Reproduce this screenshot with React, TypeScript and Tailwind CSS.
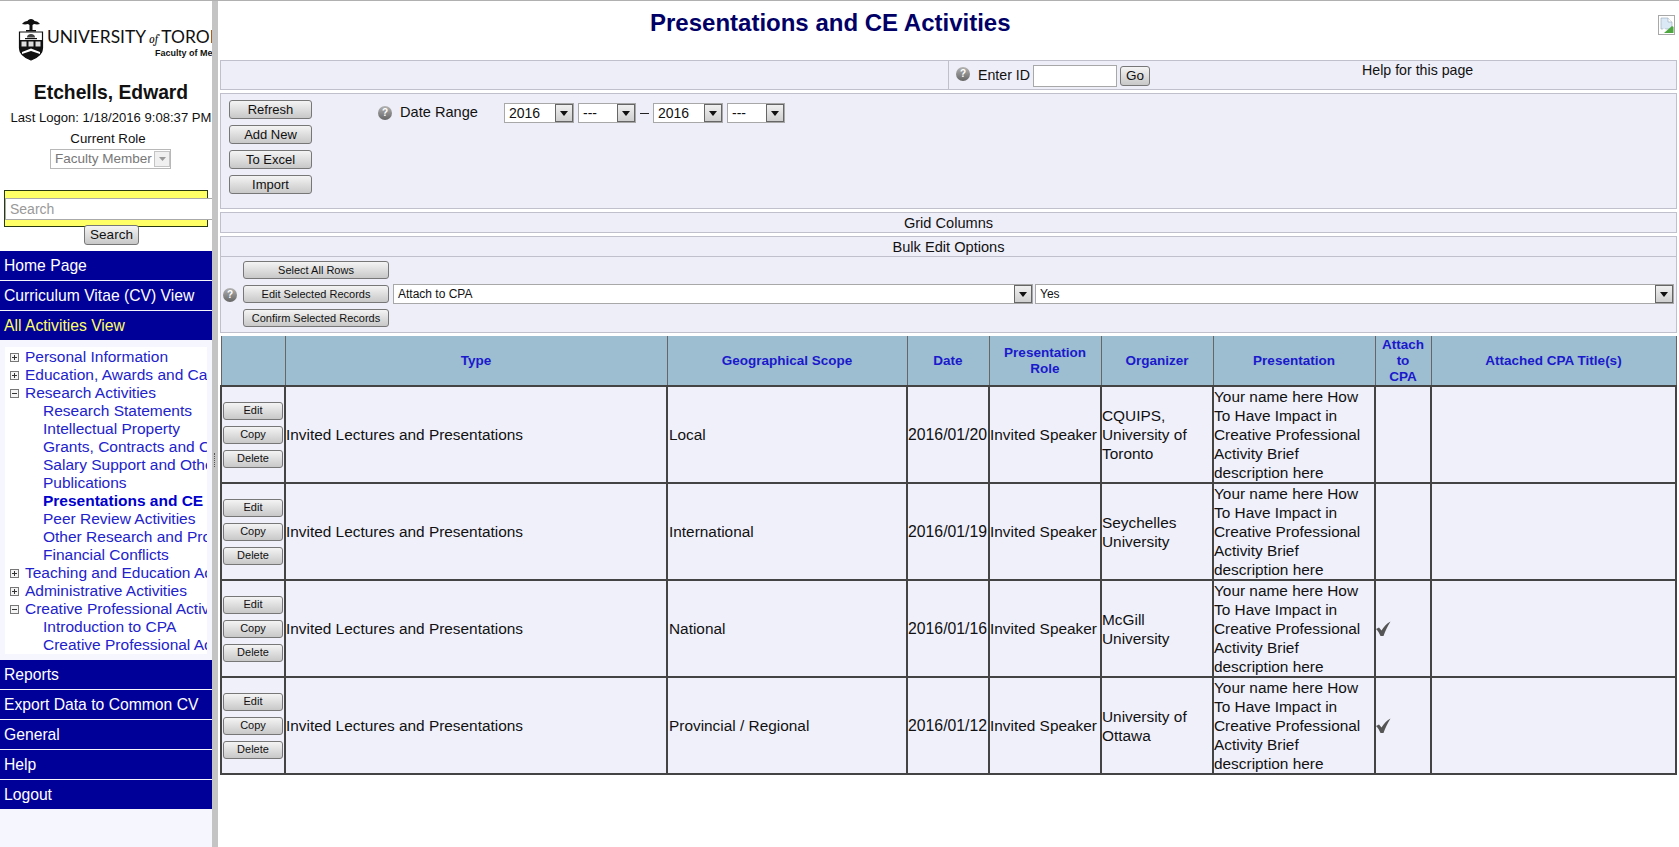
const font = { fontFamily: '"Liberation Sans", Arial, sans-serif' };

const treeTop = [
  { label: "Personal Information", open: false },
  { label: "Education, Awards and Career Information", open: false },
  { label: "Research Activities", open: true },
];
const researchKids = [
  "Research Statements",
  "Intellectual Property",
  "Grants, Contracts and Clinical Trials",
  "Salary Support and Other Funding",
  "Publications",
  "Presentations and CE Activities",
  "Peer Review Activities",
  "Other Research and Professional",
  "Financial Conflicts",
];

const rows = [
  { scope: "Local", date: "2016/01/20", org: "CQUIPS, University of Toronto", cpa: false },
  { scope: "International", date: "2016/01/19", org: "Seychelles University", cpa: false },
  { scope: "National", date: "2016/01/16", org: "McGill University", cpa: true },
  { scope: "Provincial / Regional", date: "2016/01/12", org: "University of Ottawa", cpa: true },
];

const NavItem = ({ label, active }: { label: string; active?: boolean }) => (
  <div className={`h-[29px] mb-px bg-[#000099] pl-1 text-[15.700px] leading-[29px] ${active ? "text-[#ffff66]" : "text-white"}`}>
    {label}
  </div>
);

const TreeBox = ({ open }: { open: boolean }) => (
  <svg width="9" height="9" viewBox="0 0 9 9" className="shrink-0">
    <rect x="0.5" y="0.5" width="8" height="8" fill="#f4f4f4" stroke="#777" />
    <path d={open ? "M2 4.5h5" : "M2 4.5h5M4.5 2v5"} stroke="#333" />
  </svg>
);

const TreeParent = ({ label, open }: { label: string; open: boolean }) => (
  <div className="flex h-[18px] items-center pl-[5px] whitespace-nowrap">
    <TreeBox open={open} />
    <span className="ml-[6px]">{label}</span>
  </div>
);

const TreeChild = ({ label, bold }: { label: string; bold?: boolean }) => (
  <div className={`h-[18px] pl-[38px] leading-[18px] whitespace-nowrap ${bold ? "font-bold text-[#0000cc]" : ""}`}>{label}</div>
);

const Btn = ({ label, className }: { label: string; className: string }) => (
  <button className={`block rounded-[3px] border border-[#777] bg-gradient-to-b from-[#f4f4f4] to-[#c8c8c8] text-center leading-none text-[#111] ${className}`}>
    {label}
  </button>
);

const Select = ({ value, className }: { value: string; className: string }) => (
  <div className={`flex items-stretch border border-[#a8a8a8] bg-white text-[#111] ${className}`}>
    <span className="flex-1 self-center overflow-hidden pl-1 whitespace-nowrap">{value}</span>
    <span className="flex w-[18px] items-center justify-center border border-[#666] bg-gradient-to-b from-[#f0f0f0] to-[#cfcfcf]">
      <svg width="8" height="5" viewBox="0 0 8 5">
        <path d="M0 0h8L4 5z" fill="#111" />
      </svg>
    </span>
  </div>
);

const HelpIcon = ({ className = "" }: { className?: string }) => (
  <span className={`flex h-[14px] w-[14px] shrink-0 items-center justify-center rounded-full bg-gradient-to-b from-[#b4b4b4] to-[#666] text-[10px] leading-none font-bold text-white ${className}`}>
    ?
  </span>
);

const Crest = () => (
  <svg width="26" height="42" viewBox="0 0 26 42" className="shrink-0">
    {/* tree */}
    <path d="M13 0c2 0 3 1 3.500 2 2 0 4 1 5.500 3-2 .5-4 .5-6 0l-1.500 1V12h-3V6l-1.500-1c-2 .5-4 .5-6 0C5.500 3 7.500 2 9.500 2 10 1 11 0 13 0z" fill="#111" />
    <path d="M8 11h10v1.500H8z" fill="#111" />
    {/* shield */}
    <path d="M1.500 13h23v16c0 6-5 9.500-11.500 12C6.500 38.500 1.500 35 1.500 29z" fill="#fff" stroke="#111" strokeWidth="1.200" />
    <path d="M13 15c-2.500 0-4 1.500-4 3.500h8c0-2-1.500-3.500-4-3.500z" fill="#444" />
    <path d="M7 19h12v1.200H7z" fill="#111" />
    <path d="M1.500 21h23v8H1.500z" fill="#111" />
    <path d="M3.500 22.500h5v5h-5zM10.500 22.500h5v5h-5zM17.500 22.500h5v5h-5z" fill="#ddd" />
    <path d="M1.500 29h23c0 6-5 9.500-11.500 12C6.500 38.500 1.500 35 1.500 29z" fill="#111" />
    <path d="M4 33l9-3.500 9 3.500v2l-9-3-9 3z" fill="#fff" />
  </svg>
);

const BrokenImage = () => (
  <svg width="17" height="20" viewBox="0 0 17 20">
    <rect x="0.5" y="0.5" width="16" height="19" fill="#fff" stroke="#a8a8a8" />
    <path d="M3 3h7l4 4v7L3 14z" fill="#dbe8f6" stroke="#9ab" strokeWidth="0.6" />
    <path d="M10 3v4h4" fill="#fff" stroke="#9ab" strokeWidth="0.6" />
    <path d="M6 18l8-7 1.500 1v6z" fill="#4ea641" />
    <path d="M3 17l3-4 2 2-3 3z" fill="#fff" />
  </svg>
);

const Check = () => (
  <svg width="15" height="15" viewBox="0 0 15 15" className="block">
    <path d="M0 8l3-1.500 2.500 3C7.500 6 10.500 2.500 14.500 0.500 11.500 5 9.500 9.500 7.500 15h-3C3.500 12.500 2 10 0 8z" fill="#555" />
  </svg>
);

const Th = ({ children }: { children?: React.ReactNode }) => (
  <th className="border-x border-b-2 border-x-[#666] border-b-[#444] bg-[#9dbdd0] p-0 text-center align-middle text-[13.500px] leading-[16px] font-bold text-[#1a1acc]">
    {children}
  </th>
);

const Td = ({ children }: { children?: React.ReactNode }) => (
  <td className="border-2 border-[#444] p-0 align-middle">{children}</td>
);

export default function App() {
  return (
    <div style={font} className="flex h-[847px] w-[1679px] overflow-hidden border-t border-[#b0b0b0] bg-white text-[16px] text-[#111]">
      {/* left menu */}
      <aside className="w-[212px] shrink-0 overflow-hidden bg-[#f6f6ff]">
        <div className="h-[250px] bg-white">
          <div className="flex h-[62px] items-start pt-[18px] pl-[18px] whitespace-nowrap">
            <Crest />
            <div className="ml-[3px] pt-[8px]">
              <div className="text-[17.400px] leading-[20px] text-[#111]" style={{ fontFamily: "Lato, sans-serif" }}>
                UNIVERSITY<span className="mx-[3px] font-serif text-[12px] italic">of</span>TORONTO
              </div>
              <div className="-mt-px pl-[108px] text-[9px] leading-[10px] font-bold">Faculty of Medicine</div>
            </div>
          </div>
          <div className="mt-[19px] pl-[10px] text-center text-[19.300px] leading-[22px] font-bold">Etchells, Edward</div>
          <div className="mt-[6px] pl-[10px] text-center text-[13.100px] leading-[16px] whitespace-nowrap">Last Logon: 1/18/2016 9:08:37 PM</div>
          <div className="mt-[5px] pl-[4px] text-center text-[13.300px] leading-[16px]">Current Role</div>
          <div className="mt-[2px] ml-[50px] flex h-[20px] w-[121px] items-center border border-[#b8b8b8] text-[13.500px] whitespace-nowrap text-[#777]">
            <span className="flex-1 pl-1">Faculty Member</span>
            <span className="flex h-[16px] w-[16px] items-center justify-center border border-[#c4c4c4] bg-[#f0f0f0]">
              <svg width="7" height="4" viewBox="0 0 7 4"><path d="M0 0h7L3.500 4z" fill="#999" /></svg>
            </span>
          </div>
          <div className="mt-[21px] ml-[4px] flex h-[37px] w-[204px] items-center border border-[#2a3a10] bg-[#ffff66]">
            <div className="h-[22px] w-[210px] shrink-0 border border-[#aaa] bg-white pl-1 text-[14px] leading-[20px] text-[#999]">Search</div>
          </div>
          <Btn label="Search" className="mt-[-2px] ml-[84px] h-[20px] w-[55px] text-[13.500px]" />
        </div>
        <NavItem label="Home Page" />
        <NavItem label="Curriculum Vitae (CV) View" />
        <NavItem label="All Activities View" active />
        <div className="mx-[5px] mt-[7px] mb-[6px] h-[307px] overflow-hidden bg-white py-px text-[15.500px] text-[#2222cc]">
          {treeTop.map((t) => <TreeParent key={t.label} label={t.label} open={t.open} />)}
          {researchKids.map((k) => <TreeChild key={k} label={k} bold={k.startsWith("Presentations")} />)}
          <TreeParent label="Teaching and Education Activities" open={false} />
          <TreeParent label="Administrative Activities" open={false} />
          <TreeParent label="Creative Professional Activities" open />
          <TreeChild label="Introduction to CPA" />
          <TreeChild label="Creative Professional Activities" />
        </div>
        <NavItem label="Reports" />
        <NavItem label="Export Data to Common CV" />
        <NavItem label="General" />
        <NavItem label="Help" />
        <NavItem label="Logout" />
      </aside>

      {/* splitter */}
      <div className="relative w-[6px] shrink-0 bg-[#c4c4c4]">
        <div className="absolute top-[452px] left-[2px] h-[14px] w-[2px] border-l border-dotted border-[#555]" />
      </div>

      <main className="w-[1461px] shrink-0 pl-[2px]">
        <div className="relative h-[59px]">
          <h1 className="pt-[8px] pl-[430px] text-[24px] leading-[28px] font-bold text-[#000066]">Presentations and CE Activities</h1>
          <div className="absolute top-[14px] right-[4px]"><BrokenImage /></div>
        </div>

        <div className="w-[1457px] space-y-[3px]">
          <section className="flex h-[30px] border border-[#c0c0cc] bg-[#eeeef8]">
            <div className="w-[728px] border-r border-[#c0c0cc]" />
            <div className="flex items-center pt-px pl-[7px] text-[14.200px]">
              <HelpIcon className="-mt-[4px]" />
              <span className="ml-[8px]">Enter ID</span>
              <div className="ml-[3px] h-[22px] w-[84px] border border-[#a8a8a8] bg-white" />
              <Btn label="Go" className="ml-[3px] h-[20px] w-[30px] text-[13.500px]" />
            </div>
            <div className="ml-[212px] text-[14.200px] leading-[18px]">Help for this page</div>
          </section>

          <section className="flex h-[116px] border border-[#c0c0cc] bg-[#eeeef8]">
            <div className="space-y-[6px] pt-[6px] pl-[8px]">
              <Btn label="Refresh" className="h-[19px] w-[83px] text-[13px]" />
              <Btn label="Add New" className="h-[19px] w-[83px] text-[13px]" />
              <Btn label="To Excel" className="h-[19px] w-[83px] text-[13px]" />
              <Btn label="Import" className="h-[19px] w-[83px] text-[13px]" />
            </div>
            <div className="mt-[9px] ml-[66px] flex h-[20px] items-center text-[14.600px]">
              <HelpIcon />
              <span className="ml-[8px] w-[104px]">Date Range</span>
              <Select value="2016" className="h-[20px] w-[70px] text-[14px]" />
              <Select value="---" className="ml-[4px] h-[20px] w-[58px] text-[14px]" />
              <span className="mx-[4px] h-px w-[9px] bg-[#222]" />
              <Select value="2016" className="h-[20px] w-[70px] text-[14px]" />
              <Select value="---" className="ml-[4px] h-[20px] w-[58px] text-[14px]" />
            </div>
          </section>

          <section className="h-[21px] border border-[#c0c0cc] bg-[#eeeef8] pt-px text-center text-[14.600px] leading-[19px]">Grid Columns</section>

          <section className="h-[97px] border border-[#c0c0cc] bg-[#eeeef8]">
            <div className="h-[20px] border-b border-[#c0c0cc] pt-px text-center text-[14.600px] leading-[19px]">Bulk Edit Options</div>
            <div className="flex items-center pl-[2px]">
              <HelpIcon className="mt-[5px]" />
              <div className="ml-[6px] space-y-[6px] pt-[4px]">
                <Btn label="Select All Rows" className="h-[18px] w-[146px] text-[11px]" />
                <Btn label="Edit Selected Records" className="h-[18px] w-[146px] text-[11px]" />
                <Btn label="Confirm Selected Records" className="h-[18px] w-[146px] text-[11px]" />
              </div>
              <Select value="Attach to CPA" className="mt-[4px] ml-[4px] h-[20px] w-[640px] text-[12px]" />
              <Select value="Yes" className="mt-[4px] ml-[2px] h-[20px] w-[639px] text-[12px]" />
            </div>
          </section>
        </div>

        <table className="mt-[3px] table-fixed border-collapse" style={{ width: 1455 }}>
          <colgroup>
            <col className="w-[64px]" />
            <col className="w-[382px]" />
            <col className="w-[240px]" />
            <col className="w-[82px]" />
            <col className="w-[112px]" />
            <col className="w-[112px]" />
            <col className="w-[162px]" />
            <col className="w-[56px]" />
            <col className="w-[245px]" />
          </colgroup>
          <thead>
            <tr className="h-[50px]">
              <Th />
              <Th>Type</Th>
              <Th>Geographical Scope</Th>
              <Th>Date</Th>
              <Th>Presentation Role</Th>
              <Th>Organizer</Th>
              <Th>Presentation</Th>
              <Th>Attach<br />to<br />CPA</Th>
              <Th>Attached CPA Title(s)</Th>
            </tr>
          </thead>
          <tbody>
            {rows.map((r) => (
              <tr key={r.date} className="h-[97px] bg-[#f0f0fb] text-[15.400px] leading-[19px]">
                <Td>
                  <div className="space-y-[6px] pl-px">
                    <Btn label="Edit" className="h-[18px] w-[60px] text-[11px]" />
                    <Btn label="Copy" className="h-[18px] w-[60px] text-[11px]" />
                    <Btn label="Delete" className="h-[18px] w-[60px] text-[11px]" />
                  </div>
                </Td>
                <Td>Invited Lectures and Presentations</Td>
                <Td><span className="pl-px">{r.scope}</span></Td>
                <Td><span className="text-[15.800px]">{r.date}</span></Td>
                <Td><span className="whitespace-nowrap">Invited Speaker</span></Td>
                <Td>{r.org}</Td>
                <Td>Your name here How To Have Impact in Creative Professional Activity Brief description here</Td>
                <Td>{r.cpa && <Check />}</Td>
                <Td />
              </tr>
            ))}
          </tbody>
        </table>
      </main>
    </div>
  );
}
